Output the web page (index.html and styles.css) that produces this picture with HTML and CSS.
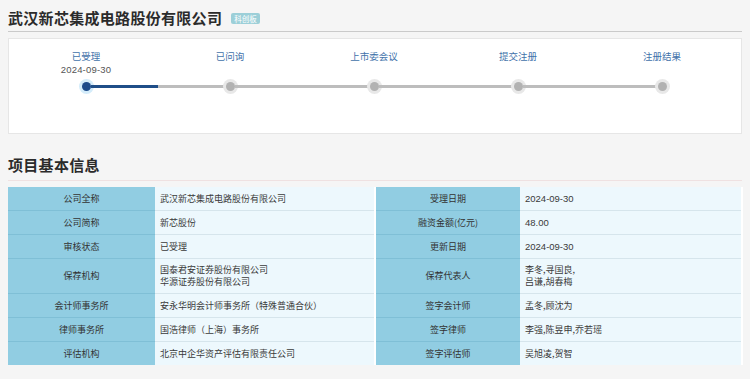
FILE: index.html
```html
<!DOCTYPE html>
<html lang="zh-CN">
<head>
<meta charset="UTF-8">
<meta name="viewport" content="width=device-width, initial-scale=1.0">
<title>项目基本信息</title>
<link rel="stylesheet" href="styles.css">
</head>
<body>
<div class="page">
    <div class="company-head">
        <h1>武汉新芯集成电路股份有限公司</h1>
        <span class="badge">科创板</span>
    </div>

    <div class="progress-card">
        <div class="steps">
            <div class="step done">
                <div class="step-name">已受理</div>
                <div class="step-date">2024-09-30</div>
                <div class="step-track">
                    <span class="seg seg-none"></span>
                    <span class="dot"></span>
                    <span class="seg seg-blue"></span>
                </div>
            </div>
            <div class="step">
                <div class="step-name">已问询</div>
                <div class="step-date"></div>
                <div class="step-track">
                    <span class="seg"></span>
                    <span class="dot"></span>
                    <span class="seg"></span>
                </div>
            </div>
            <div class="step">
                <div class="step-name">上市委会议</div>
                <div class="step-date"></div>
                <div class="step-track">
                    <span class="seg"></span>
                    <span class="dot"></span>
                    <span class="seg"></span>
                </div>
            </div>
            <div class="step">
                <div class="step-name">提交注册</div>
                <div class="step-date"></div>
                <div class="step-track">
                    <span class="seg"></span>
                    <span class="dot"></span>
                    <span class="seg"></span>
                </div>
            </div>
            <div class="step">
                <div class="step-name">注册结果</div>
                <div class="step-date"></div>
                <div class="step-track">
                    <span class="seg"></span>
                    <span class="dot"></span>
                    <span class="seg seg-none"></span>
                </div>
            </div>
        </div>
    </div>

    <h2 class="section-title">项目基本信息</h2>

    <table class="info-table">
        <colgroup>
            <col class="col-label1">
            <col class="col-value1">
            <col class="col-label2">
            <col class="col-value2">
        </colgroup>
        <tr>
            <th>公司全称</th>
            <td>武汉新芯集成电路股份有限公司</td>
            <th>受理日期</th>
            <td class="num">2024-09-30</td>
        </tr>
        <tr>
            <th>公司简称</th>
            <td>新芯股份</td>
            <th>融资金额(亿元)</th>
            <td class="num">48.00</td>
        </tr>
        <tr>
            <th>审核状态</th>
            <td>已受理</td>
            <th>更新日期</th>
            <td class="num">2024-09-30</td>
        </tr>
        <tr class="double">
            <th>保荐机构</th>
            <td>国泰君安证券股份有限公司<br>华源证券股份有限公司</td>
            <th>保荐代表人</th>
            <td>李冬,寻国良,<br>吕谦,胡春梅</td>
        </tr>
        <tr>
            <th>会计师事务所</th>
            <td>安永华明会计师事务所（特殊普通合伙）</td>
            <th>签字会计师</th>
            <td>孟冬,顾沈为</td>
        </tr>
        <tr>
            <th>律师事务所</th>
            <td>国浩律师（上海）事务所</td>
            <th>签字律师</th>
            <td>李强,陈昱申,乔若瑶</td>
        </tr>
        <tr>
            <th>评估机构</th>
            <td>北京中企华资产评估有限责任公司</td>
            <th>签字评估师</th>
            <td>吴旭凌,贺智</td>
        </tr>
    </table>
</div>
</body>
</html>
```

FILE: styles.css
```css
body {
    margin: 0;
    padding: 0;
    background-color: #f5f5f5;
    font-family: "Noto Sans CJK SC", "Noto Sans", sans-serif;
    color: #333;
}

.page {
    padding: 0 8px;
}

.company-head {
    display: flex;
    align-items: center;
    height: 26px;
    padding-top: 5px;
    border-bottom: 1px solid #cacaca;
}

.company-head h1 {
    margin: 0;
    font-size: 15px;
    font-weight: 700;
    letter-spacing: 0.3px;
    color: #2b2b2b;
    line-height: 18px;
}

.badge {
    margin-left: 9px;
    padding: 0 3px;
    height: 11px;
    line-height: 11px;
    font-size: 7.5px;
    color: #fff;
    background-color: #9ccfd8;
    border-radius: 2px;
}

.progress-card {
    margin-top: 6px;
    height: 94px;
    background-color: #fff;
    border: 1px solid #e6e6e6;
}

.steps {
    display: grid;
    grid-template-columns: repeat(5, 144px);
    padding: 11px 0 0 5px;
}

.step {
    display: flex;
    flex-direction: column;
    align-items: center;
}

.step-name {
    font-size: 9.5px;
    line-height: 13px;
    color: #4272aa;
}

.step-date {
    font-family: "Liberation Sans", Arial, sans-serif;
    font-size: 9.5px;
    line-height: 11px;
    height: 11px;
    margin-top: 1px;
    color: #555;
    letter-spacing: 0.2px;
}

.step-track {
    display: flex;
    align-items: center;
    width: 100%;
    height: 16px;
    margin-top: 3px;
}

.seg {
    flex: 1;
    height: 3px;
    background-color: #bdbdbd;
}

.seg-blue {
    background-color: #1f4e88;
}

.seg-none {
    background-color: transparent;
}

.dot {
    width: 9px;
    height: 9px;
    border-radius: 50%;
    background-color: #b2b2b2;
    box-shadow: 0 0 0 3px #e8e8e8;
    flex-shrink: 0;
}

.done .dot {
    background-color: #1c4a8a;
    box-shadow: 0 0 0 3px #d4ecfa;
}

.section-title {
    margin: 22px 0 0 0;
    padding-bottom: 6px;
    font-size: 15px;
    line-height: 18px;
    font-weight: 700;
    color: #2b2b2b;
    letter-spacing: 0.3px;
    border-bottom: 1px solid #efe1e1;
}

.info-table {
    margin-top: 6px;
    width: 100%;
    border-collapse: collapse;
    table-layout: fixed;
    font-size: 9px;
}

.col-label1 { width: 147px; }
.col-value1 { width: 220px; }
.col-label2 { width: 145px; }
.col-value2 { width: 222px; }

.info-table th,
.info-table td {
    height: 23px;
    padding: 0 6px;
    line-height: 12px;
    border-bottom: 1px solid #d6e5ec;
}

.info-table th {
    font-weight: 400;
    text-align: center;
    color: #333;
    background-color: #91cde2;
    border-bottom-color: #7fbfd6;
}

.info-table td {
    text-align: left;
    color: #3a3a3a;
    background-color: #edf8fd;
    border-right: 2px solid #fff;
    padding-left: 5px;
}

.info-table td.num {
    font-family: "Liberation Sans", Arial, sans-serif;
    font-size: 9.5px;
}

.info-table tr:last-child th,
.info-table tr:last-child td {
    border-bottom: none;
}

.info-table tr.double th,
.info-table tr.double td {
    height: 34px;
}
```
